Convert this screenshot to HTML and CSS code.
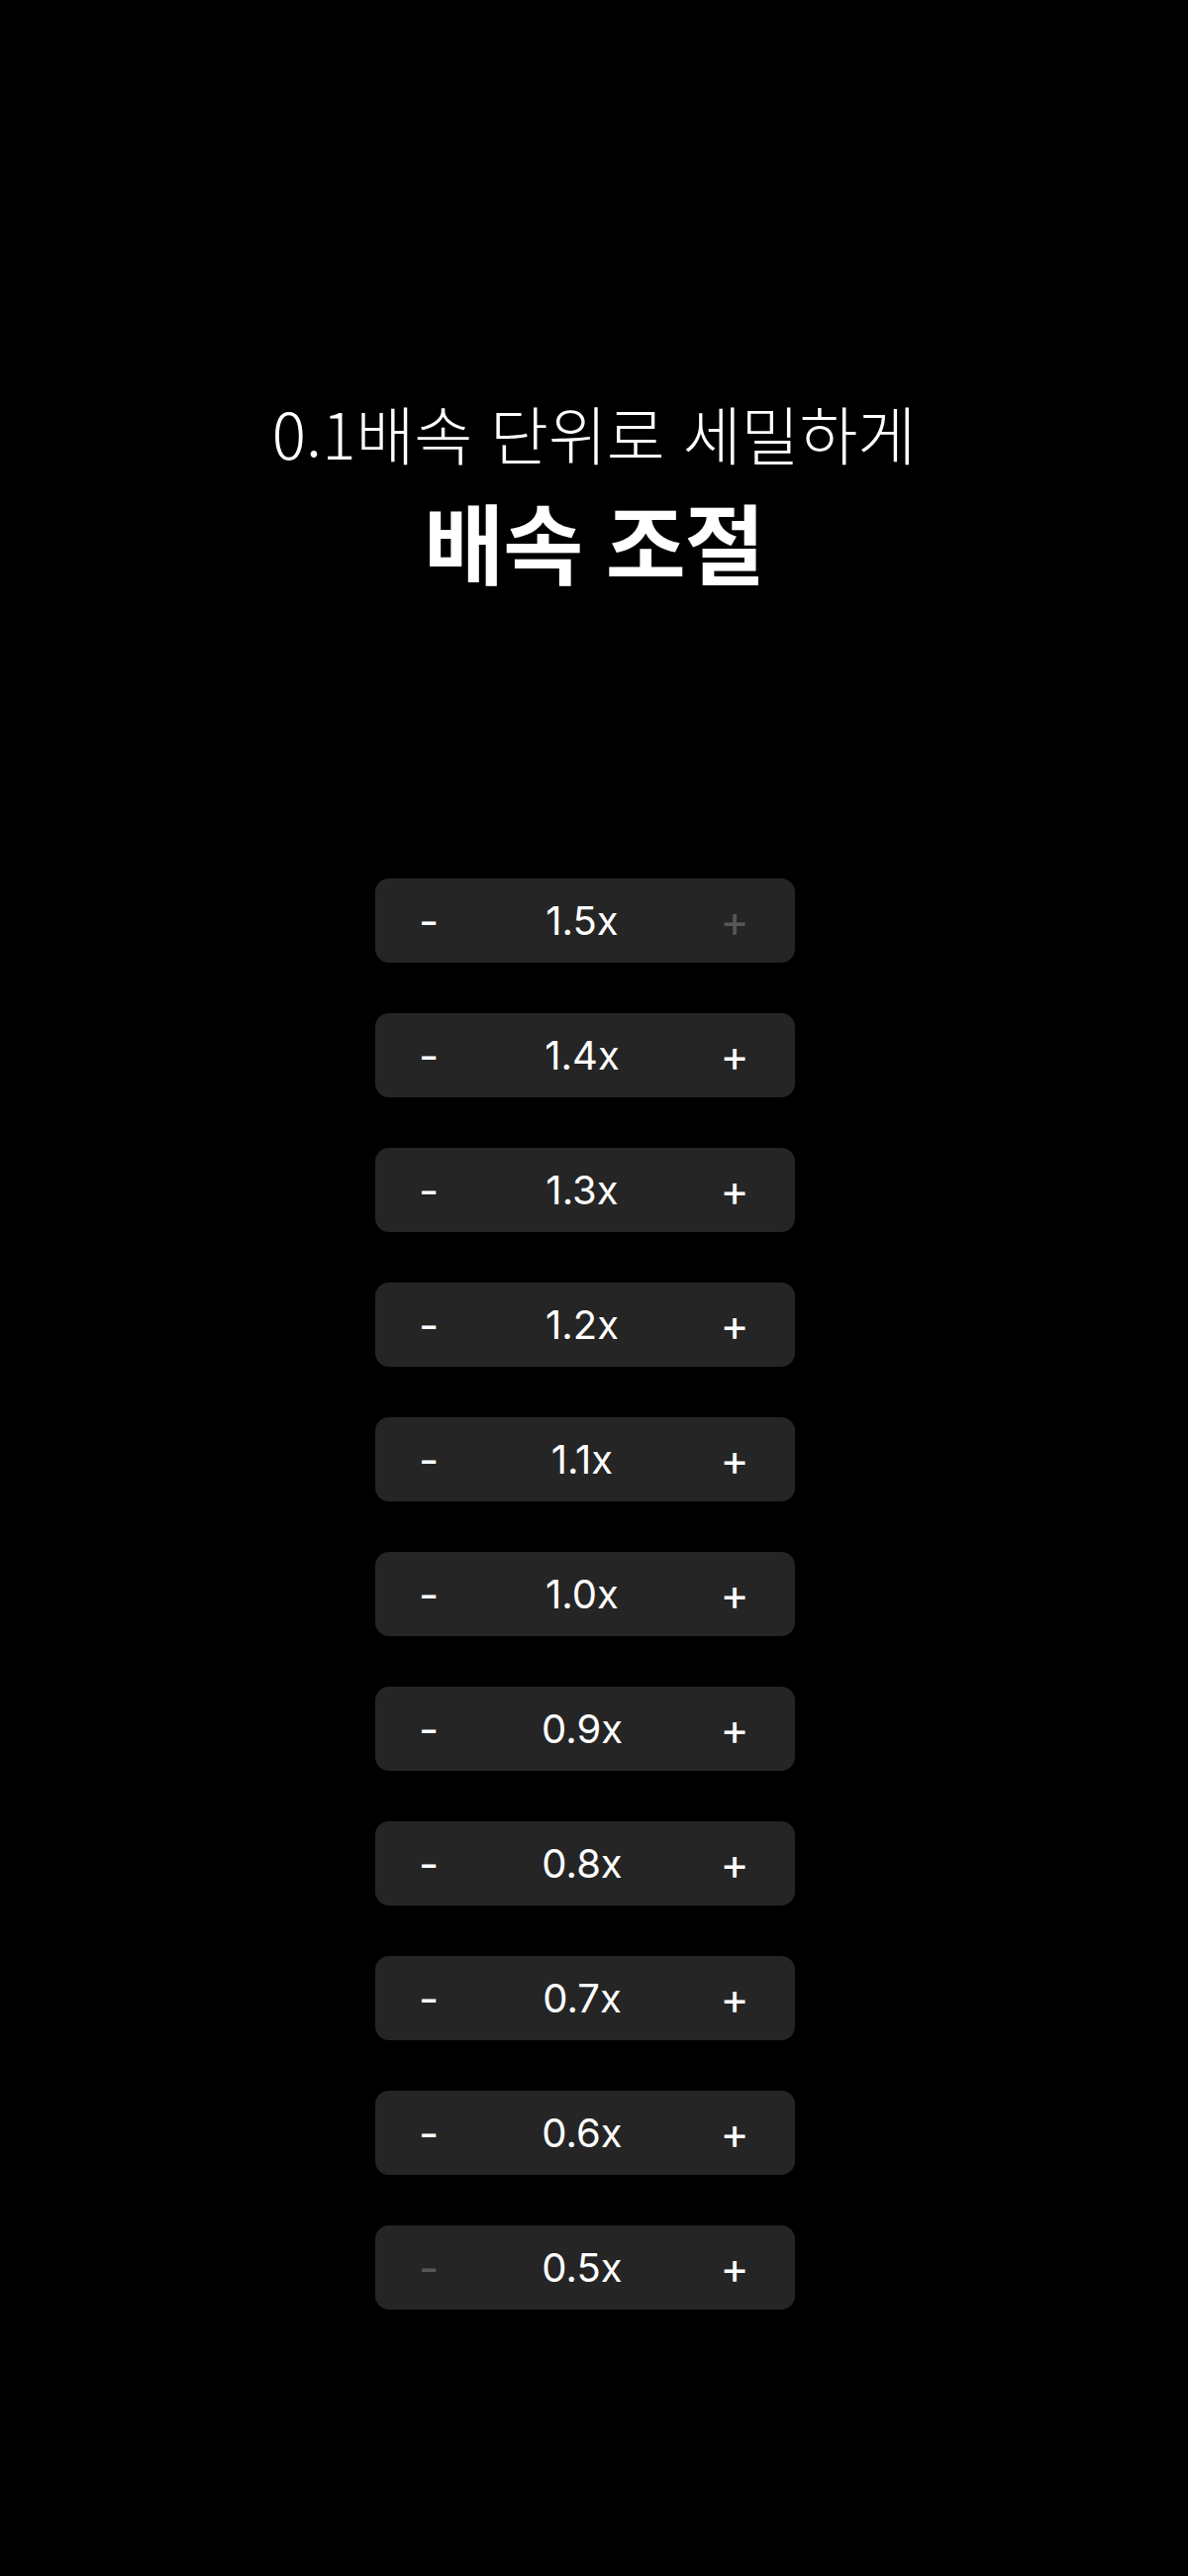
FILE: index.html
```html
<!DOCTYPE html>
<html lang="ko">
<head>
    <meta charset="UTF-8">
    <meta name="viewport" content="width=device-width, initial-scale=1.0">
    <title>배속 조절</title>
    <link rel="stylesheet" href="styles.css">
</head>
<body>
    <div class="page">
        <div class="title">
            <p class="sub">0.1배속 단위로 세밀하게</p>
            <h1 class="main">배속 조절</h1>
        </div>
        <div class="speeds">
            <div class="speed"><span class="btn">-</span><span class="value">1.5x</span><span class="btn off">+</span></div>
            <div class="speed"><span class="btn">-</span><span class="value">1.4x</span><span class="btn">+</span></div>
            <div class="speed"><span class="btn">-</span><span class="value">1.3x</span><span class="btn">+</span></div>
            <div class="speed"><span class="btn">-</span><span class="value">1.2x</span><span class="btn">+</span></div>
            <div class="speed"><span class="btn">-</span><span class="value">1.1x</span><span class="btn">+</span></div>
            <div class="speed"><span class="btn">-</span><span class="value">1.0x</span><span class="btn">+</span></div>
            <div class="speed"><span class="btn">-</span><span class="value">0.9x</span><span class="btn">+</span></div>
            <div class="speed"><span class="btn">-</span><span class="value">0.8x</span><span class="btn">+</span></div>
            <div class="speed"><span class="btn">-</span><span class="value">0.7x</span><span class="btn">+</span></div>
            <div class="speed"><span class="btn">-</span><span class="value">0.6x</span><span class="btn">+</span></div>
            <div class="speed"><span class="btn off">-</span><span class="value">0.5x</span><span class="btn">+</span></div>
        </div>
    </div>
</body>
</html>
```

FILE: styles.css
```css
*{
    margin: 0;
    padding: 0;
    box-sizing: border-box;
}
html, body{
    background: #000;
}
body{
    color: #fff;
    font-family: "Noto Sans CJK KR", "Noto Sans", sans-serif;
}
.page{
    min-height: 2601px;
    display: flex;
    flex-direction: column;
    align-items: center;
}
.title{
    padding-top: 396px;
    text-align: center;
}
.sub{
    font-size: 64px;
    font-weight: 300;
    line-height: 80px;
}
.main{
    margin-top: 14px;
    font-size: 88px;
    font-weight: 700;
    line-height: 110px;
    letter-spacing: -1px;
}
.speeds{
    margin-top: 287px;
    padding-right: 18px;
    display: flex;
    flex-direction: column;
    gap: 51px;
}
.speed{
    width: 424px;
    height: 85px;
    border-radius: 14px;
    background: #252525;
    display: grid;
    grid-template-columns: 108px 1fr 122px;
    align-items: center;
    font-family: Inter, "Noto Sans", sans-serif;
    font-size: 40px;
    text-align: center;
}
.value{
    padding-left: 8px;
}
.btn{
    font-size: 44px;
}
.btn.off{
    color: #585858;
}
```
